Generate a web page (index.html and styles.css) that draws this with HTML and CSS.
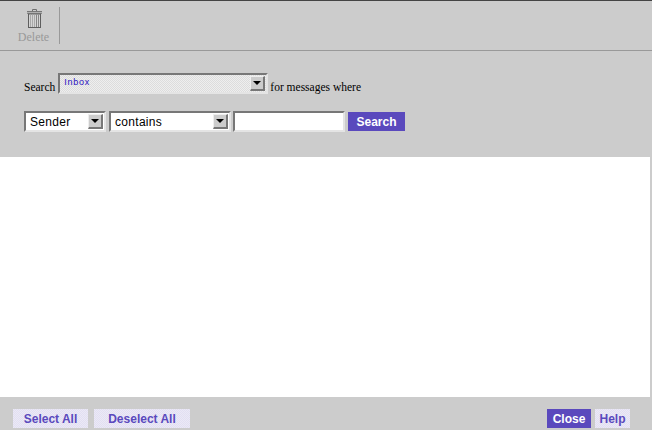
FILE: index.html
```html
<!DOCTYPE html>
<html lang="en">
<head>
<meta charset="utf-8">
<title>Search messages</title>
<link rel="stylesheet" href="styles.css">
</head>
<body>
<div class="page">
  <header class="toolbar">
    <div class="tool">
      <svg class="trash" width="15" height="19" viewBox="0 0 15 19" aria-hidden="true">
        <path d="M5.5 2V.5h4V2" fill="none" stroke="#6e6e6e"/>
        <rect x="0" y="2" width="15" height="3" fill="#b0b0b0"/>
        <path d="M0 2.5h15" stroke="#777777"/>
        <path d="M0 4.5h15" stroke="#8a8a8a"/>
        <rect x="1.5" y="5" width="12" height="13.5" fill="#d4d4d4" stroke="#5e5e5e"/>
        <path d="M3.5 5.5v12.5M5.5 5.5v12.5M7.5 5.5v12.5" stroke="#a8a8a8"/>
        <path d="M9.5 5.5v12.5M11.5 5.5v12.5" stroke="#858585"/>
      </svg>
      <span class="tool-label">Delete</span>
    </div>
    <div class="tool-sep"></div>
  </header>
  <section class="search-panel">
    <div class="row-folder">
      <span class="serif-label">Search</span>
      <div class="select select-folder">
        <span class="folder-value">Inbox</span>
        <span class="arrow"></span>
      </div>
      <span class="serif-label">for messages where</span>
    </div>
    <div class="row-criteria">
      <div class="select select-field"><span class="value">Sender</span><span class="arrow"></span></div>
      <div class="select select-op"><span class="value">contains</span><span class="arrow"></span></div>
      <div class="select text-input"></div>
      <button class="btn btn-primary btn-search" type="button">Search</button>
    </div>
  </section>
  <main class="results"></main>
  <footer class="footer">
    <div class="group">
      <button class="btn btn-soft btn-select" type="button">Select All</button>
      <button class="btn btn-soft btn-deselect" type="button">Deselect All</button>
    </div>
    <div class="group group-right">
      <button class="btn btn-primary btn-close" type="button">Close</button>
      <button class="btn btn-soft btn-help" type="button">Help</button>
    </div>
  </footer>
</div>
</body>
</html>
```
FILE: styles.css
```css
html, body {
  margin: 0;
  padding: 0;
  height: 100%;
  overflow: hidden;
  background: #cccccc;
}
.page {
  width: 652px;
  height: 430px;
  display: flex;
  flex-direction: column;
  box-sizing: border-box;
  background: #cccccc;
}
.toolbar {
  height: 51px;
  flex: none;
  box-sizing: border-box;
  border-top: 1px solid #444444;
  border-bottom: 1px solid #999999;
  padding: 6px 0 0 18px;
  display: flex;
  align-items: flex-start;
}
.tool {
  width: 31px;
  display: flex;
  flex-direction: column;
  align-items: center;
}
.trash { display: block; margin: 2px 0 0 1px; }
.tool-label {
  font: 12px/12px "Liberation Serif", serif;
  color: #999999;
  margin-top: 3px;
}
.tool-sep {
  width: 1px;
  height: 37px;
  background: #999999;
  margin-left: 10px;
}
.search-panel {
  height: 106px;
  flex: none;
  box-sizing: border-box;
  padding: 22px 0 0 24px;
}
.row-folder {
  display: flex;
  align-items: flex-end;
  height: 21px;
}
.serif-label {
  font: 11.5px/14px "Liberation Serif", serif;
  color: #000000;
}
.select {
  box-sizing: border-box;
  display: flex;
  justify-content: space-between;
  background: #ffffff;
  border-style: solid;
  border-width: 2px;
  border-color: #777777 #e4e4e4 #e4e4e4 #777777;
}
.select-folder {
  width: 210px;
  height: 21px;
  margin: 0 2px 0 3px;
  background: conic-gradient(#dcdcdc 25%, #eeeeee 0 50%, #dcdcdc 0 75%, #eeeeee 0) 0 0 / 2px 2px;
  align-items: flex-start;
  align-self: flex-start;
  padding-right: 1px;
}
.folder-value {
  font: 9px/11px "Liberation Sans", sans-serif;
  letter-spacing: 0.75px;
  color: #2a10c0;
  margin: 2px 0 0 4px;
}
.arrow {
  width: 15px;
  height: 15px;
  box-sizing: border-box;
  background: #cccccc;
  border-style: solid;
  border-width: 1px 2px 2px 1px;
  border-color: #eeeeee #777777 #777777 #eeeeee;
  position: relative;
  margin: 1px 0 0 0;
  flex: none;
}
.arrow::after {
  content: "";
  position: absolute;
  left: 2px;
  top: 4px;
  border-style: solid;
  border-width: 4px 4px 0 4px;
  border-color: #000000 transparent transparent transparent;
}
.row-criteria {
  display: flex;
  align-items: flex-start;
  margin-top: 17px;
}
.select-field { width: 82px; height: 21px; margin-right: 3px; padding-right: 1px; }
.select-op { width: 122px; height: 21px; margin-right: 2px; padding-right: 1px; }
.text-input { width: 112px; height: 21px; }
.value {
  font: 12px/19px "Liberation Sans", sans-serif;
  letter-spacing: 0.3px;
  color: #000000;
  padding-left: 4px;
}
.results {
  flex: 1 1 auto;
  background: #ffffff;
  margin-right: 2px;
}
.footer {
  height: 33px;
  flex: none;
  box-sizing: border-box;
  padding: 12px 22px 0 13px;
  display: flex;
  justify-content: space-between;
  align-items: flex-start;
}
.group { display: flex; gap: 6px; }
.group-right { gap: 4px; }
.btn {
  display: block;
  border: 0;
  padding: 2px 0 0;
  height: 19px;
  font: bold 12px/17px "Liberation Sans", sans-serif;
  text-align: center;
}
.btn-primary { background: #5a49bd; color: #ffffff; }
.btn-soft {
  background: conic-gradient(#e2dff2 25%, #ebe9f6 0 50%, #e2dff2 0 75%, #ebe9f6 0) 0 0 / 2px 2px;
  color: #5a49bd;
}
.btn-search { width: 57px; margin: 1px 0 0 3px; }
.btn-select { width: 75px; }
.btn-deselect { width: 96px; }
.btn-close { width: 44px; }
.btn-help { width: 35px; }
```
